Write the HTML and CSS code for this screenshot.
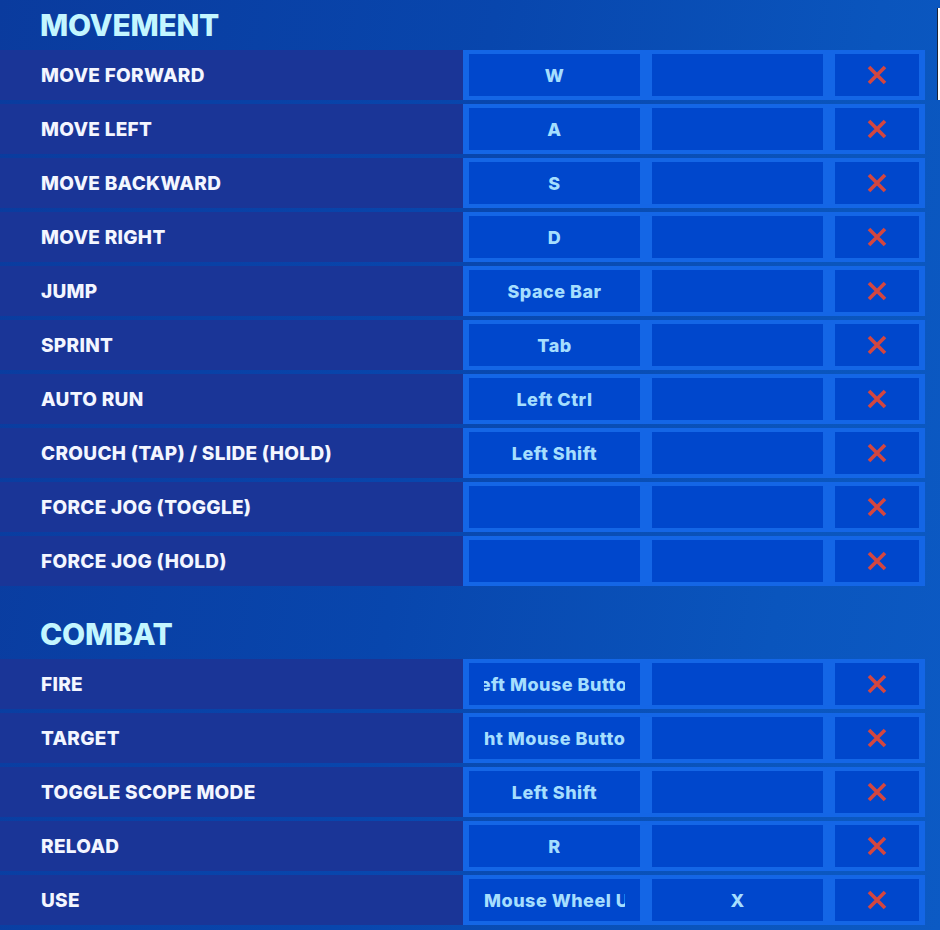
FILE: index.html
```html
<!DOCTYPE html>
<html>
<head>
<meta charset="utf-8">
<title>Keybinds</title>
<link rel="stylesheet" href="styles.css">
</head>
<body>
<div class="page">
  <section class="section">
    <h2 class="section-title">MOVEMENT</h2>
    <div class="rows">
      <div class="row"><div class="label">MOVE FORWARD</div><div class="binds"><div class="key">W</div><div class="key"></div><div class="clear"><svg viewBox="0 0 22 22"><path d="M3 3L19 19M19 3L3 19"/></svg></div></div></div>
      <div class="row"><div class="label">MOVE LEFT</div><div class="binds"><div class="key">A</div><div class="key"></div><div class="clear"><svg viewBox="0 0 22 22"><path d="M3 3L19 19M19 3L3 19"/></svg></div></div></div>
      <div class="row"><div class="label">MOVE BACKWARD</div><div class="binds"><div class="key">S</div><div class="key"></div><div class="clear"><svg viewBox="0 0 22 22"><path d="M3 3L19 19M19 3L3 19"/></svg></div></div></div>
      <div class="row"><div class="label">MOVE RIGHT</div><div class="binds"><div class="key">D</div><div class="key"></div><div class="clear"><svg viewBox="0 0 22 22"><path d="M3 3L19 19M19 3L3 19"/></svg></div></div></div>
      <div class="row"><div class="label">JUMP</div><div class="binds"><div class="key">Space Bar</div><div class="key"></div><div class="clear"><svg viewBox="0 0 22 22"><path d="M3 3L19 19M19 3L3 19"/></svg></div></div></div>
      <div class="row"><div class="label">SPRINT</div><div class="binds"><div class="key">Tab</div><div class="key"></div><div class="clear"><svg viewBox="0 0 22 22"><path d="M3 3L19 19M19 3L3 19"/></svg></div></div></div>
      <div class="row"><div class="label">AUTO RUN</div><div class="binds"><div class="key">Left Ctrl</div><div class="key"></div><div class="clear"><svg viewBox="0 0 22 22"><path d="M3 3L19 19M19 3L3 19"/></svg></div></div></div>
      <div class="row"><div class="label">CROUCH (TAP) / SLIDE (HOLD)</div><div class="binds"><div class="key">Left Shift</div><div class="key"></div><div class="clear"><svg viewBox="0 0 22 22"><path d="M3 3L19 19M19 3L3 19"/></svg></div></div></div>
      <div class="row"><div class="label">FORCE JOG (TOGGLE)</div><div class="binds"><div class="key"></div><div class="key"></div><div class="clear"><svg viewBox="0 0 22 22"><path d="M3 3L19 19M19 3L3 19"/></svg></div></div></div>
      <div class="row"><div class="label">FORCE JOG (HOLD)</div><div class="binds"><div class="key"></div><div class="key"></div><div class="clear"><svg viewBox="0 0 22 22"><path d="M3 3L19 19M19 3L3 19"/></svg></div></div></div>
    </div>
  </section>
  <section class="section">
    <h2 class="section-title">COMBAT</h2>
    <div class="rows">
      <div class="row"><div class="label">FIRE</div><div class="binds"><div class="key"><div class="marquee"><span class="shift-left">Left Mouse Button</span></div></div><div class="key"></div><div class="clear"><svg viewBox="0 0 22 22"><path d="M3 3L19 19M19 3L3 19"/></svg></div></div></div>
      <div class="row"><div class="label">TARGET</div><div class="binds"><div class="key"><div class="marquee"><span class="shift-right">Right Mouse Button</span></div></div><div class="key"></div><div class="clear"><svg viewBox="0 0 22 22"><path d="M3 3L19 19M19 3L3 19"/></svg></div></div></div>
      <div class="row"><div class="label">TOGGLE SCOPE MODE</div><div class="binds"><div class="key">Left Shift</div><div class="key"></div><div class="clear"><svg viewBox="0 0 22 22"><path d="M3 3L19 19M19 3L3 19"/></svg></div></div></div>
      <div class="row"><div class="label">RELOAD</div><div class="binds"><div class="key">R</div><div class="key"></div><div class="clear"><svg viewBox="0 0 22 22"><path d="M3 3L19 19M19 3L3 19"/></svg></div></div></div>
      <div class="row"><div class="label">USE</div><div class="binds"><div class="key"><div class="marquee"><span>Mouse Wheel Up</span></div></div><div class="key">X</div><div class="clear"><svg viewBox="0 0 22 22"><path d="M3 3L19 19M19 3L3 19"/></svg></div></div></div>
    </div>
  </section>
  <div class="scroll-thumb"></div>
</div>
</body>
</html>
```

FILE: styles.css
```css
* { box-sizing: border-box; }
html, body {
  margin: 0;
  padding: 0;
  height: 930px;
  overflow: hidden;
}
body {
  background: linear-gradient(100deg, #0a3b9e 0%, #0846ad 45%, #0a55bd 80%, #0c5ac4 100%);
  font-family: "Inter", "Liberation Sans", sans-serif;
}
.page {
  position: relative;
  width: 940px;
  height: 930px;
}
.section {
  width: 925px;
}
.section + .section {
  margin-top: 23px;
}
.section-title {
  margin: 0;
  height: 50px;
  line-height: 50px;
  padding-left: 40px;
  font-size: 30px;
  font-weight: 800;
  color: #c3f6ff;
  letter-spacing: -0.3px;
}
.rows {
  display: flex;
  flex-direction: column;
  gap: 4px;
}
.row {
  display: flex;
  height: 50px;
}
.label {
  width: 463px;
  display: flex;
  align-items: center;
  padding-left: 41px;
  background: #1a3597;
  color: #f3f6ff;
  font-size: 19px;
  font-weight: 800;
  letter-spacing: 0.3px;
  white-space: nowrap;
}
.binds {
  width: 462px;
  background: #1466e6;
  padding: 4px 6px;
  display: grid;
  grid-template-columns: 171px 171px 84px;
  gap: 12px;
}
.key, .clear {
  background: #0047cc;
  display: flex;
  align-items: center;
  justify-content: center;
  color: #a5defe;
  font-size: 18px;
  font-weight: 800;
  letter-spacing: 0.5px;
  white-space: nowrap;
}
.marquee {
  width: 141px;
  overflow: hidden;
  display: flex;
}
.marquee span {
  flex: none;
}
.marquee .shift-left { margin-left: -15px; }
.marquee .shift-right { margin-left: -30px; }
.clear svg {
  width: 22px;
  height: 22px;
  fill: none;
  stroke: #d4463f;
  stroke-width: 3.6;
}
.scroll-thumb {
  position: absolute;
  left: 937px;
  top: 8px;
  width: 3px;
  height: 92px;
  background: #ffffff;
  border-left: 1px solid #1b2233;
}
```
